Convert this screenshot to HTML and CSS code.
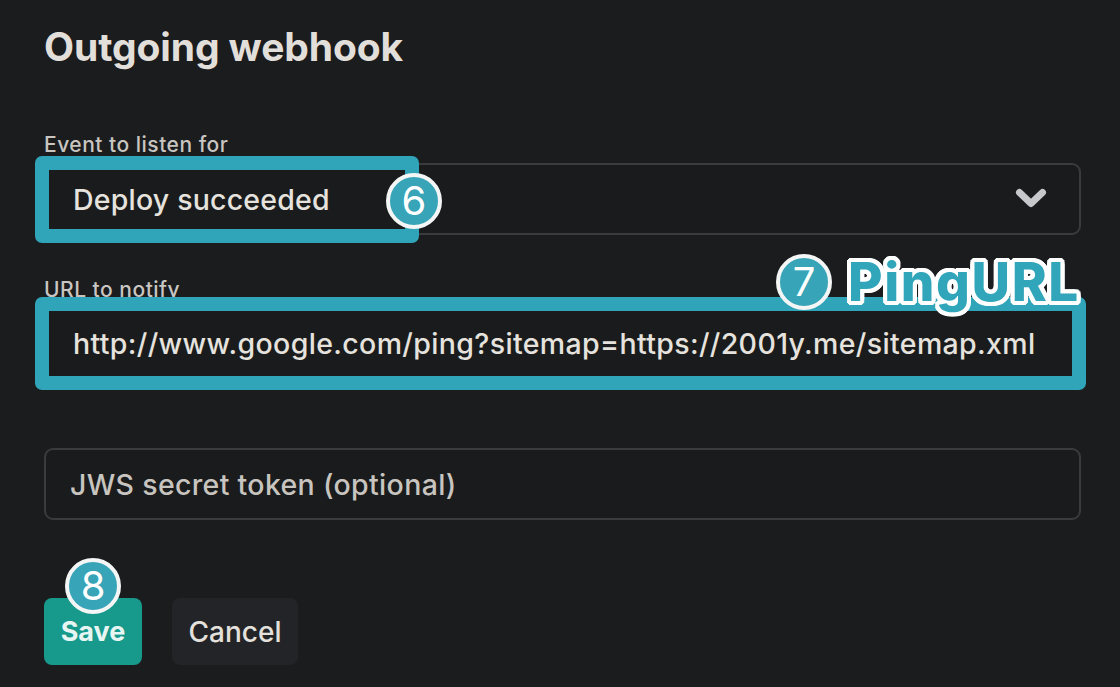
FILE: index.html
```html
<!DOCTYPE html>
<html lang="en">
<head>
<meta charset="utf-8">
<title>Outgoing webhook</title>
<link rel="stylesheet" href="styles.css">
</head>
<body>
<div class="page">
  <h1 class="title">Outgoing webhook</h1>

  <div class="field field-event">
    <label class="label">Event to listen for</label>
    <div class="control select">
      <span class="value">Deploy succeeded</span>
      <svg class="chevron" width="32" height="22" viewBox="0 0 32 22" aria-hidden="true">
        <polyline points="4.5,4.5 16,15.5 27.5,4.5" fill="none" stroke="#c6c8cb" stroke-width="7" stroke-linecap="round" stroke-linejoin="round"/>
      </svg>
      <div class="hl hl-event"></div>
      <div class="badge badge-6">6</div>
    </div>
  </div>

  <div class="field field-url">
    <label class="label">URL to notify</label>
    <div class="control input">
      <span class="value value-url">http://www.google.com/ping?sitemap=https://2001y.me/sitemap.xml</span>
      <div class="hl hl-url"></div>
      <div class="note">
        <span class="badge">7</span>
        <span class="note-text">PingURL</span>
      </div>
    </div>
  </div>

  <div class="control input token">
    <span class="placeholder">JWS secret token (optional)</span>
  </div>

  <div class="actions">
    <button class="btn save">Save<span class="badge badge-8">8</span></button>
    <button class="btn cancel">Cancel</button>
  </div>
</div>
</body>
</html>
```

FILE: styles.css
```css
html, body {
  margin: 0;
  padding: 0;
  background: #1b1c1e;
}

body {
  width: 1120px;
  height: 687px;
  overflow: hidden;
  font-family: Inter, "Liberation Sans", Arial, sans-serif;
  color: #e4e1dc;
}

.page {
  padding: 24px 0 0 44px;
  width: 1037px;
}

.title {
  margin: 0;
  font-size: 39px;
  line-height: 46px;
  height: 46px;
  font-weight: 700;
  color: #e2dfda;
  letter-spacing: -0.1px;
}

.field {
  display: flex;
  flex-direction: column;
  gap: 6px;
}

.field-event { margin-top: 63px; }
.field-url { margin-top: 43px; }

.label {
  display: block;
  font-size: 21px;
  line-height: 24px;
  height: 24px;
  font-weight: 500;
  color: #c9c6c1;
  letter-spacing: 0.5px;
}

.control {
  position: relative;
  box-sizing: border-box;
  height: 72px;
  border: 2px solid #3a3b3e;
  border-radius: 9px;
  background: #1a1b1d;
  display: flex;
  align-items: center;
  padding: 0 32px 0 27px;
  font-size: 28.5px;
  font-weight: 500;
}

.field-url .control { margin-top: -1px; }

.select { justify-content: space-between; }

.value { color: #e6e3de; white-space: nowrap; letter-spacing: 0.2px; }

.value-url { letter-spacing: 0.36px; }

.token { margin-top: 69px; padding-left: 24px; }

.placeholder { color: #c8c4bf; white-space: nowrap; letter-spacing: 0.33px; }

.chevron { display: block; }

.hl {
  position: absolute;
  box-sizing: border-box;
  border: 14px solid #30a4b8;
  border-radius: 7px;
  pointer-events: none;
}

.hl-event {
  left: -11px;
  top: -9px;
  width: 384px;
  height: 87px;
}

.hl-url {
  left: -11px;
  top: -12px;
  width: 1051px;
  height: 93px;
}

.badge {
  position: absolute;
  box-sizing: border-box;
  width: 56px;
  height: 56px;
  border-radius: 50%;
  background: #37a4b8;
  border: 4px solid #f4f6f6;
  color: #ffffff;
  font-size: 40px;
  font-weight: 400;
  line-height: 48px;
  text-align: center;
}

.badge-6 {
  left: 340px;
  top: 8px;
}

.note {
  position: absolute;
  left: 730px;
  top: -55px;
  display: flex;
  align-items: center;
  gap: 16px;
  height: 56px;
}

.note .badge { position: static; flex: none; }

.note-text {
  font-size: 53px;
  font-weight: 800;
  color: #31a5b9;
  letter-spacing: 1.6px;
  line-height: 56px;
  text-shadow:
    4px 0 0 #fff, -4px 0 0 #fff, 0 4px 0 #fff, 0 -4px 0 #fff,
    3px 3px 0 #fff, -3px 3px 0 #fff, 3px -3px 0 #fff, -3px -3px 0 #fff,
    4px 2px 0 #fff, -4px 2px 0 #fff, 4px -2px 0 #fff, -4px -2px 0 #fff,
    2px 4px 0 #fff, -2px 4px 0 #fff, 2px -4px 0 #fff, -2px -4px 0 #fff;
}

.actions {
  margin-top: 78px;
  display: flex;
  gap: 30px;
}

.btn {
  position: relative;
  box-sizing: border-box;
  height: 67px;
  border: none;
  border-radius: 8px;
  font-family: Inter, "Liberation Sans", Arial, sans-serif;
  padding: 0;
  cursor: pointer;
}

.save {
  width: 98px;
  background: #17998b;
  color: #e8f6f3;
  font-size: 27px;
  font-weight: 700;
}

.cancel {
  width: 126px;
  background: #232427;
  color: #e4e1dc;
  font-size: 28px;
  font-weight: 500;
}

.badge-8 {
  left: 21px;
  top: -40px;
}
```
